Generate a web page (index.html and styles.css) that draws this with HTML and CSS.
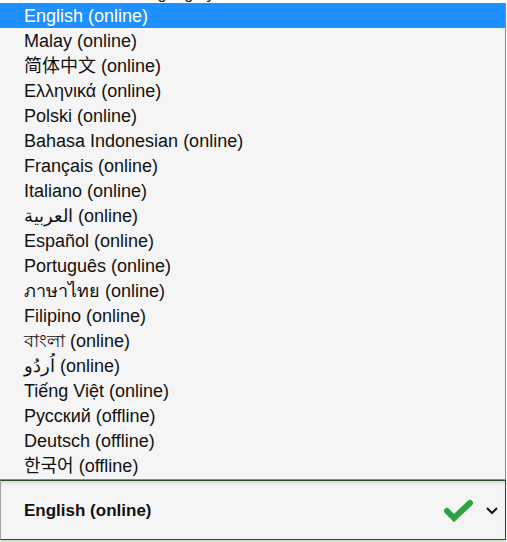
FILE: index.html
```html
<!DOCTYPE html>
<html>
<head>
<meta charset="utf-8">
<link rel="stylesheet" href="styles.css">
</head>
<body>
<div class="behind"><div class="behind-text">Please choose the language you want to use for the translation of the text on this page and then continue</div></div>
<ul class="list">
  <li class="opt active">English (online)</li>
  <li class="opt">Malay (online)</li>
  <li class="opt">简体中文 (online)</li>
  <li class="opt">Ελληνικά (online)</li>
  <li class="opt">Polski (online)</li>
  <li class="opt">Bahasa Indonesian (online)</li>
  <li class="opt">Français (online)</li>
  <li class="opt">Italiano (online)</li>
  <li class="opt">العربية (online)</li>
  <li class="opt">Español (online)</li>
  <li class="opt">Português (online)</li>
  <li class="opt">ภาษาไทย (online)</li>
  <li class="opt">Filipino (online)</li>
  <li class="opt">বাংলা (online)</li>
  <li class="opt">اُردُو (online)</li>
  <li class="opt">Tiếng Việt (online)</li>
  <li class="opt">Русский (offline)</li>
  <li class="opt">Deutsch (offline)</li>
  <li class="opt">한국어 (offline)</li>
</ul>
<div class="select">
  <span class="sel-label">English (online)</span>
  <svg class="check" width="32" height="24" viewBox="0 0 32 24"><polyline points="5,12 12,19 28,4" fill="none" stroke="#2ea343" stroke-width="6" stroke-linecap="round" stroke-linejoin="miter"/></svg>
  <svg class="chev" width="14" height="10" viewBox="0 0 14 10"><polyline points="2,2 7,7 12,2" fill="none" stroke="#111" stroke-width="2"/></svg>
</div>
<div class="under"></div>
</body>
</html>
```
FILE: styles.css
```css
html, body {
  margin: 0;
  padding: 0;
  background: #fff;
}
body {
  width: 506px;
  font-family: "Liberation Sans", Arial, "Noto Sans CJK SC", sans-serif;
  font-size: 18px;
  color: #111;
}
.behind {
  height: 3px;
  overflow: hidden;
  background: #fff;
}
.behind-text {
  margin-top: -15px;
  line-height: 18px;
  font-size: 16px;
  white-space: nowrap;
  color: #222;
}
.list {
  list-style: none;
  margin: 0;
  padding: 0 0 1px 0;
  background: #f5f5f5;
  border-right: 1px solid #8c8c8c;
  border-bottom: 1px solid #8c8c8c;
}
.opt {
  height: 24px;
  line-height: 25px;
  padding-top: 1px;
  padding-left: 24px;
  white-space: nowrap;
  overflow: hidden;
}
.opt.active {
  background: #1e90ff;
  color: #fff;
}
.select {
  height: 58px;
  border: 1px solid #264a26;
  border-left: 1px solid #9aa89a;
  background: #f5f5f5;
  box-shadow: inset 0 4px 4px -2px rgba(0,0,0,0.12);
  display: flex;
  align-items: center;
  padding-left: 23px;
  padding-right: 6px;
}
.sel-label {
  font-weight: bold;
  font-size: 17px;
  flex: 1;
  margin-top: 2px;
}
.check {
  margin-right: 11px;
  margin-top: 1px;
}
.chev {
  margin-top: 1px;
}
.under {
  height: 2px;
  background: #cfe5c9;
}
```
